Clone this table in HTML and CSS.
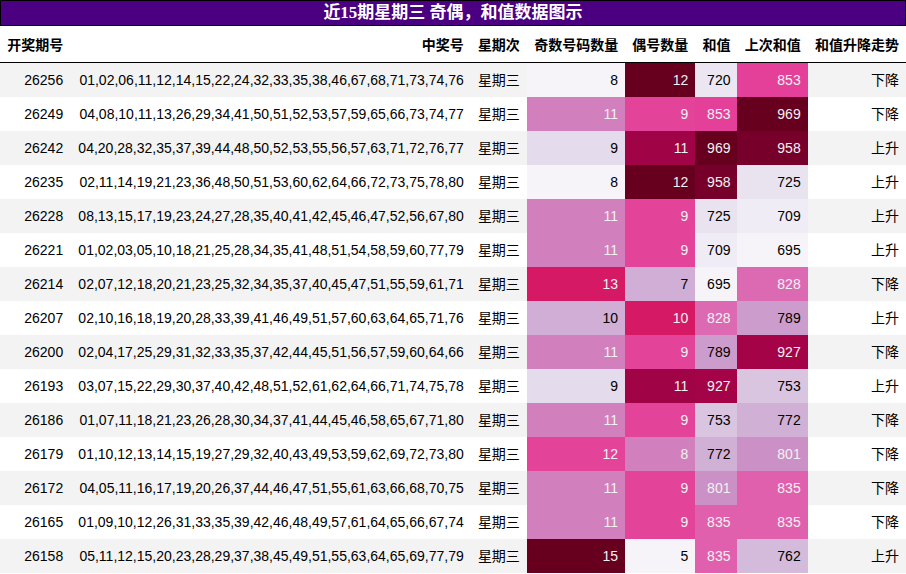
FILE: index.html
```html
<!DOCTYPE html>
<html lang="zh">
<head>
<meta charset="utf-8">
<title>近15期星期三 奇偶，和值数据图示</title>
<link rel="stylesheet" href="styles.css">
</head>
<body>
<table class="data">
  <caption class="title">近15期星期三 奇偶，和值数据图示</caption>
  <thead>
    <tr>
      <th>开奖期号</th>
      <th>中奖号</th>
      <th>星期次</th>
      <th>奇数号码数量</th>
      <th>偶号数量</th>
      <th>和值</th>
      <th>上次和值</th>
      <th>和值升降走势</th>
    </tr>
  </thead>
  <tbody>
    <tr><td>26256</td><td>01,02,06,11,12,14,15,22,24,32,33,35,38,46,67,68,71,73,74,76</td><td>星期三</td><td style="background:#f7f4f9">8</td><td class="lt" style="background:#67001f">12</td><td style="background:#ebe6f2">720</td><td class="lt" style="background:#e44099">853</td><td>下降</td></tr>
    <tr><td>26249</td><td>04,08,10,11,13,26,29,34,41,50,51,52,53,57,59,65,66,73,74,77</td><td>星期三</td><td class="lt" style="background:#d280bd">11</td><td class="lt" style="background:#e4439a">9</td><td class="lt" style="background:#e44099">853</td><td class="lt" style="background:#67001f">969</td><td>下降</td></tr>
    <tr><td>26242</td><td>04,20,28,32,35,37,39,44,48,50,52,53,55,56,57,63,71,72,76,77</td><td>星期三</td><td style="background:#e4dbec">9</td><td class="lt" style="background:#a00346">11</td><td class="lt" style="background:#67001f">969</td><td class="lt" style="background:#77002b">958</td><td>上升</td></tr>
    <tr><td>26235</td><td>02,11,14,19,21,23,36,48,50,51,53,60,62,64,66,72,73,75,78,80</td><td>星期三</td><td style="background:#f7f4f9">8</td><td class="lt" style="background:#67001f">12</td><td class="lt" style="background:#77002b">958</td><td style="background:#e9e3f0">725</td><td>上升</td></tr>
    <tr><td>26228</td><td>08,13,15,17,19,23,24,27,28,35,40,41,42,45,46,47,52,56,67,80</td><td>星期三</td><td class="lt" style="background:#d280bd">11</td><td class="lt" style="background:#e4439a">9</td><td style="background:#e9e3f0">725</td><td style="background:#f0ecf5">709</td><td>上升</td></tr>
    <tr><td>26221</td><td>01,02,03,05,10,18,21,25,28,34,35,41,48,51,54,58,59,60,77,79</td><td>星期三</td><td class="lt" style="background:#d280bd">11</td><td class="lt" style="background:#e4439a">9</td><td style="background:#f0ecf5">709</td><td style="background:#f7f4f9">695</td><td>上升</td></tr>
    <tr><td>26214</td><td>02,07,12,18,20,21,23,25,32,34,35,37,40,45,47,51,55,59,61,71</td><td>星期三</td><td class="lt" style="background:#d51965">13</td><td style="background:#d1aed5">7</td><td style="background:#f7f4f9">695</td><td class="lt" style="background:#dc6ab3">828</td><td>下降</td></tr>
    <tr><td>26207</td><td>02,10,16,18,19,20,28,33,39,41,46,49,51,57,60,63,64,65,71,76</td><td>星期三</td><td style="background:#d1aed5">10</td><td class="lt" style="background:#d51965">10</td><td class="lt" style="background:#dc6ab3">828</td><td style="background:#cc9dcc">789</td><td>上升</td></tr>
    <tr><td>26200</td><td>02,04,17,25,29,31,32,33,35,37,42,44,45,51,56,57,59,60,64,66</td><td>星期三</td><td class="lt" style="background:#d280bd">11</td><td class="lt" style="background:#e4439a">9</td><td style="background:#cc9dcc">789</td><td class="lt" style="background:#a40447">927</td><td>下降</td></tr>
    <tr><td>26193</td><td>03,07,15,22,29,30,37,40,42,48,51,52,61,62,64,66,71,74,75,78</td><td>星期三</td><td style="background:#e4dbec">9</td><td class="lt" style="background:#a00346">11</td><td class="lt" style="background:#a40447">927</td><td style="background:#dac5e0">753</td><td>上升</td></tr>
    <tr><td>26186</td><td>01,07,11,18,21,23,26,28,30,34,37,41,44,45,46,58,65,67,71,80</td><td>星期三</td><td class="lt" style="background:#d280bd">11</td><td class="lt" style="background:#e4439a">9</td><td style="background:#dac5e0">753</td><td style="background:#d1b0d5">772</td><td>下降</td></tr>
    <tr><td>26179</td><td>01,10,12,13,14,15,19,27,29,32,40,43,49,53,59,62,69,72,73,80</td><td>星期三</td><td class="lt" style="background:#e4439a">12</td><td class="lt" style="background:#d280bd">8</td><td style="background:#d1b0d5">772</td><td class="lt" style="background:#cb90c5">801</td><td>下降</td></tr>
    <tr><td>26172</td><td>04,05,11,16,17,19,20,26,37,44,46,47,51,55,61,63,66,68,70,75</td><td>星期三</td><td class="lt" style="background:#d280bd">11</td><td class="lt" style="background:#e4439a">9</td><td class="lt" style="background:#cb90c5">801</td><td class="lt" style="background:#e060ad">835</td><td>下降</td></tr>
    <tr><td>26165</td><td>01,09,10,12,26,31,33,35,39,42,46,48,49,57,61,64,65,66,67,74</td><td>星期三</td><td class="lt" style="background:#d280bd">11</td><td class="lt" style="background:#e4439a">9</td><td class="lt" style="background:#e060ad">835</td><td class="lt" style="background:#e060ad">835</td><td>下降</td></tr>
    <tr><td>26158</td><td>05,11,12,15,20,23,28,29,37,38,45,49,51,55,63,64,65,69,77,79</td><td>星期三</td><td class="lt" style="background:#67001f">15</td><td style="background:#f7f4f9">5</td><td class="lt" style="background:#e060ad">835</td><td style="background:#d5bbdb">762</td><td>上升</td></tr>
  </tbody>
</table>
</body>
</html>
```

FILE: styles.css
```css
html, body {
  margin: 0;
  padding: 0;
  background: #ffffff;
}

.data {
  width: 906px;
  border-collapse: collapse;
  border-spacing: 0;
  font-family: "Liberation Sans", "Noto Sans CJK SC", sans-serif;
  font-size: 14px;
  color: #000000;
}

.title {
  caption-side: top;
  box-sizing: border-box;
  height: 26px;
  padding: 0;
  border: 1px solid #000000;
  background: #4b0082;
  color: #ffffff;
  font-family: "Liberation Serif", "Noto Sans CJK SC", serif;
  font-size: 17px;
  font-weight: bold;
  line-height: 24px;
  text-align: center;
  white-space: nowrap;
}

.data th {
  padding: 9px 7px 7px;
  line-height: 20px;
  font-weight: bold;
  text-align: right;
  white-space: nowrap;
  background: #ffffff;
  border-bottom: 1px solid #000000;
}

.data td {
  padding: 7px;
  line-height: 20px;
  text-align: right;
  white-space: nowrap;
}

.data tbody tr:nth-child(odd) {
  background: #f3f3f3;
}

.data tbody tr:nth-child(even) {
  background: #ffffff;
}

.data td.lt {
  color: #f1f1f1;
}
```
